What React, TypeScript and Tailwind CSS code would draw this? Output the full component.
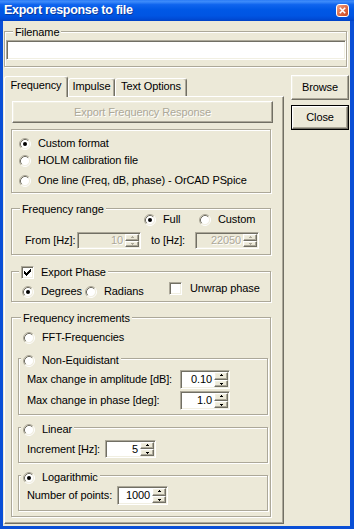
import React from 'react';

// classic 3d edges
const raised =
  'border border-t-white border-l-white border-r-[#716F64] border-b-[#716F64] shadow-[inset_-1px_-1px_0_#ACA899,inset_1px_1px_0_#F1EFE2] bg-[#ECE9D8]';
const sunken =
  'border border-t-[#ACA899] border-l-[#ACA899] border-r-white border-b-white shadow-[inset_1px_1px_0_#716F64,inset_-1px_-1px_0_#F1EFE2]';
const etched = 'border border-[#ACA899] shadow-[inset_1px_1px_0_#fff,1px_1px_0_#fff]';

const RadioDot: React.FC<{ checked?: boolean }> = ({ checked }) => (
  <svg width="12" height="12" viewBox="0 0 12 12" className="shrink-0">
    <circle cx="6" cy="6" r="4.5" fill="#fff" />
    <path d="M2.11 9.89A5.5 5.5 0 0 1 9.89 2.11" fill="none" stroke="#ACA899" />
    <path d="M9.89 2.11A5.5 5.5 0 0 1 2.11 9.89" fill="none" stroke="#fff" />
    <path d="M2.82 9.18A4.5 4.5 0 0 1 9.18 2.82" fill="none" stroke="#716F64" />
    <path d="M9.18 2.82A4.5 4.5 0 0 1 2.82 9.18" fill="none" stroke="#F1EFE2" />
    {checked && <circle cx="6" cy="6" r="2" fill="#000" />}
  </svg>
);

const Radio: React.FC<{ checked?: boolean; label: string; className?: string }> = ({
  checked,
  label,
  className,
}) => (
  <div className={`flex h-[13px] items-center gap-[7px] whitespace-nowrap ${className || ''}`}>
    <RadioDot checked={checked} />
    <span>{label}</span>
  </div>
);

const CheckBox: React.FC<{ checked?: boolean }> = ({ checked }) => (
  <div className={`flex h-[13px] w-[13px] shrink-0 items-center justify-center bg-white ${sunken}`}>
    {checked && (
      <svg width="7" height="7" viewBox="0 0 7 7" shapeRendering="crispEdges">
        <rect x="6" y="0" width="1" height="1" />
        <rect x="5" y="1" width="2" height="1" />
        <rect x="0" y="2" width="1" height="1" />
        <rect x="4" y="2" width="3" height="1" />
        <rect x="0" y="3" width="2" height="1" />
        <rect x="3" y="3" width="3" height="1" />
        <rect x="0" y="4" width="5" height="1" />
        <rect x="1" y="5" width="3" height="1" />
        <rect x="2" y="6" width="1" height="1" />
      </svg>
    )}
  </div>
);

const Arrow: React.FC<{ up?: boolean; disabled?: boolean }> = ({ up, disabled }) => (
  <svg width="5" height="3" viewBox="0 0 5 3" shapeRendering="crispEdges" fill={disabled ? '#ACA899' : '#000'}>
    {up ? (
      <>
        <rect x="2" y="0" width="1" height="1" />
        <rect x="1" y="1" width="3" height="1" />
      </>
    ) : (
      <>
        <rect x="1" y="1" width="3" height="1" />
        <rect x="2" y="2" width="1" height="1" />
      </>
    )}
  </svg>
);

const Spin: React.FC<{ value: string; className: string; disabled?: boolean }> = ({
  value,
  className,
  disabled,
}) => (
  <div className={`flex shrink-0 ${sunken} p-[1px] ${disabled ? 'bg-[#ECE9D8]' : 'bg-white'} ${className}`}>
    <div
      className={`flex flex-1 items-center justify-end pr-[2px] ${
        disabled ? 'text-[#ACA899] [text-shadow:1px_1px_0_#fff]' : 'text-black'
      }`}
    >
      {value}
    </div>
    <div className="flex w-[14px] flex-col">
      <div className={`flex flex-1 items-center justify-center ${raised}`}>
        <Arrow up disabled={disabled} />
      </div>
      <div className={`flex flex-1 items-center justify-center ${raised}`}>
        <Arrow disabled={disabled} />
      </div>
    </div>
  </div>
);

const GroupBox: React.FC<{
  label?: React.ReactNode;
  labelClass?: string;
  className?: string;
  children?: React.ReactNode;
}> = ({ label, labelClass, className, children }) => (
  <div className={`relative shrink-0 ${etched} ${className || ''}`}>
    {label && (
      <div className={`absolute flex items-center bg-[#ECE9D8] px-[2px] whitespace-nowrap ${labelClass || '-top-[6px] left-[8px]'}`}>
        {label}
      </div>
    )}
    {children}
  </div>
);

const TitleBar = () => (
  <div className="flex h-[21px] shrink-0 items-center bg-[linear-gradient(180deg,#2C7CF6_0%,#3D8BFA_8%,#0F64EE_22%,#0058E6_45%,#0055E3_75%,#004BD6_90%,#0042C4_100%)] pl-[4px] pr-[5px]">
    <span className="flex-1 text-[12.5px] font-bold tracking-[-0.3px] text-white [text-shadow:1px_1px_0_#0A3A9E]">
      Export response to file
    </span>
    <div className="flex h-[13px] w-[13px] items-center justify-center rounded-[3px] border border-white bg-[linear-gradient(135deg,#F0A58A_0%,#E2714E_45%,#C8461F_100%)]">
      <svg width="7" height="7" viewBox="0 0 7 7">
        <path d="M0.8 0.8L6.2 6.2M6.2 0.8L0.8 6.2" stroke="#fff" strokeWidth="1.6" />
      </svg>
    </div>
  </div>
);

const TabControl = () => (
  <div className="flex w-[280px] shrink-0 flex-col">
    <div className="flex h-[21px] items-end">
      <div className="relative z-10 -mb-[1px] h-[21px] w-[64px] rounded-t-[3px] border-t border-l border-r border-t-white border-l-white border-r-[#716F64] bg-[#ECE9D8] pt-[2px] text-center shadow-[inset_-1px_0_0_#ACA899]">
        Frequency
      </div>
      <div className="h-[18px] w-[47px] rounded-t-[3px] border-t border-l border-r border-t-white border-l-white border-r-[#716F64] pt-[1px] text-center shadow-[inset_-1px_0_0_#ACA899]">
        Impulse
      </div>
      <div className="h-[18px] w-[72px] rounded-t-[3px] border-t border-l border-r border-t-white border-l-white border-r-[#716F64] pt-[1px] text-center shadow-[inset_-1px_0_0_#ACA899]">
        Text Options
      </div>
    </div>
    <div className="flex h-[428px] flex-col border border-t-white border-l-white border-r-[#716F64] border-b-[#716F64] pl-[6px] shadow-[inset_-1px_-1px_0_#ACA899]">
      <div
        className={`mt-[4px] ml-[1px] flex h-[22px] w-[261px] shrink-0 items-center justify-center text-[#ACA899] [text-shadow:1px_1px_0_#fff] ${raised}`}
      >
        Export Frequency Response
      </div>

      <GroupBox className="mt-[6px] h-[64px] w-[260px] pl-[7px]">
        <Radio className="mt-[7px]" checked label="Custom format" />
        <Radio className="mt-[4px]" label="HOLM calibration file" />
        <Radio className="mt-[7px]" label="One line (Freq, dB, phase) - OrCAD PSpice" />
      </GroupBox>

      <GroupBox label="Frequency range" className="mt-[15px] h-[47px] w-[260px]">
        <div className="mt-[4px] flex pl-[132px]">
          <Radio className="w-[55px]" checked label="Full" />
          <Radio label="Custom" />
        </div>
        <div className="mt-[6px] flex items-center pl-[13px]">
          <span className="w-[52px] whitespace-nowrap">From [Hz]:</span>
          <Spin disabled value="10" className="h-[17px] w-[64px]" />
          <span className="ml-[10px] w-[44px] whitespace-nowrap">to [Hz]:</span>
          <Spin disabled value="22050" className="h-[17px] w-[64px]" />
        </div>
      </GroupBox>

      <GroupBox
        label={
          <div className="flex items-center gap-[7px]">
            <CheckBox checked />
            <span>Export Phase</span>
          </div>
        }
        labelClass="-top-[6px] left-[7px]"
        className="mt-[16px] h-[31px] w-[260px]"
      >
        <div className="mt-[10px] flex items-start pl-[10px]">
          <Radio className="mt-[3px] w-[63px] gap-[5px]" checked label="Degrees" />
          <Radio className="mt-[3px] w-[84px] gap-[6px]" label="Radians" />
          <div className="flex h-[13px] items-center gap-[8px] whitespace-nowrap">
            <CheckBox />
            <span>Unwrap phase</span>
          </div>
        </div>
      </GroupBox>

      <GroupBox label="Frequency increments" labelClass="-top-[6px] left-[9px]" className="mt-[15px] h-[200px] w-[260px]">
        <Radio className="mt-[13px] ml-[11px]" label="FFT-Frequencies" />

        <GroupBox
          label={<Radio label="Non-Equidistant" />}
          labelClass="-top-[5px] left-[2px]"
          className="mt-[14px] ml-[6px] h-[57px] w-[250px]"
        >
          <div className="mt-[11px] flex items-center pl-[8px]">
            <span className="w-[153px] whitespace-nowrap">Max change in amplitude [dB]:</span>
            <Spin value="0.10" className="h-[19px] w-[50px]" />
          </div>
          <div className="mt-[2px] flex items-center pl-[8px]">
            <span className="w-[153px] whitespace-nowrap">Max change in phase [deg]:</span>
            <Spin value="1.0" className="h-[19px] w-[50px]" />
          </div>
        </GroupBox>

        <GroupBox
          label={<Radio label="Linear" />}
          labelClass="-top-[5px] left-[2px]"
          className="mt-[12px] ml-[6px] h-[36px] w-[250px]"
        >
          <div className="mt-[12px] flex items-center pl-[8px]">
            <span className="w-[78px] whitespace-nowrap">Increment [Hz]:</span>
            <Spin value="5" className="h-[18px] w-[51px]" />
          </div>
        </GroupBox>

        <GroupBox
          label={<Radio checked label="Logarithmic" />}
          labelClass="-top-[5px] left-[2px]"
          className="mt-[12px] ml-[6px] h-[36px] w-[250px]"
        >
          <div className="mt-[10px] flex items-center pl-[8px]">
            <span className="w-[90px] whitespace-nowrap">Number of points:</span>
            <Spin value="1000" className="h-[19px] w-[51px]" />
          </div>
        </GroupBox>
      </GroupBox>
    </div>
  </div>
);

export default function App() {
  return (
    <div className="flex h-[529px] w-[354px] select-none flex-col bg-[#0A4FD6] font-['Liberation_Sans',Arial,sans-serif] text-[11px] leading-[13px] tracking-[-0.1px] text-black">
      <TitleBar />
      <div className="mr-[4px] mb-[3px] ml-[3px] flex flex-1 flex-col bg-[#ECE9D8] pt-[10px] pl-[1px]">
        <GroupBox label="Filename" className="h-[36px] w-[343px]">
          <div className={`mt-[8px] ml-[1px] h-[20px] w-[340px] bg-white ${sunken}`} />
        </GroupBox>
        <div className="mt-[8px] flex items-start">
          <TabControl />
          <div className="ml-[7px] flex w-[58px] shrink-0 flex-col">
            <div className={`flex h-[25px] items-center justify-center ${raised}`}>Browse</div>
            <div className="mt-[5px] h-[25px] border border-black">
              <div className={`flex h-full items-center justify-center ${raised}`}>Close</div>
            </div>
          </div>
        </div>
      </div>
    </div>
  );
}
